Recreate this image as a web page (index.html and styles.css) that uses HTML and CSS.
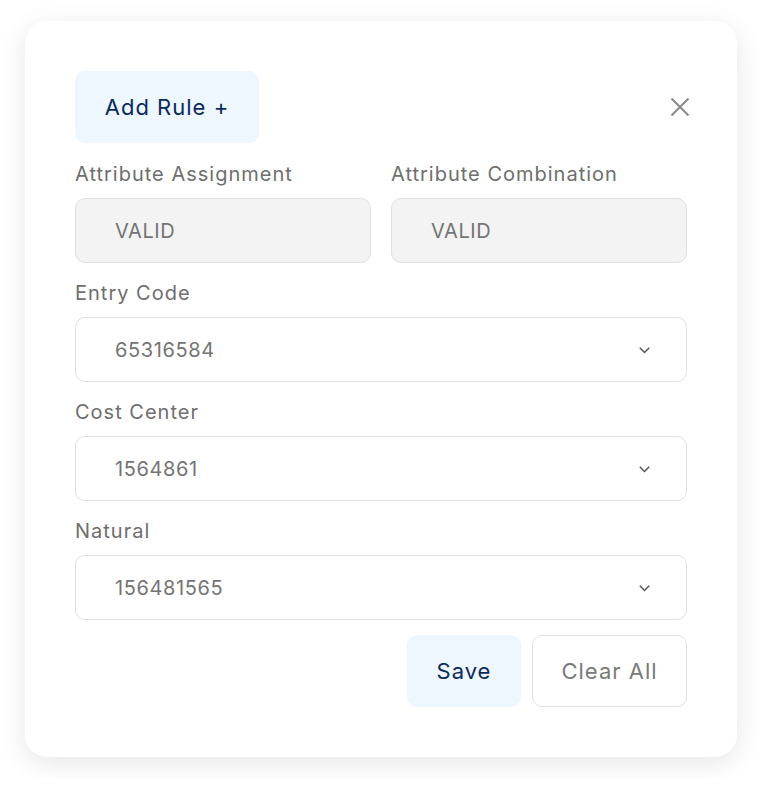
FILE: index.html
```html
<!DOCTYPE html>
<html>
<head>
<meta charset="utf-8">
<link rel="stylesheet" href="styles.css">
</head>
<body>
<div class="card">
  <div class="header">
    <button class="btn btn-primary add-rule">Add Rule +</button>
    <button class="close" aria-label="Close">
      <svg width="20" height="20" viewBox="0 0 20 20"><path d="M1.5 1.5 L18.5 18.5 M18.5 1.5 L1.5 18.5" stroke="#8c8c8c" stroke-width="2.2" fill="none" stroke-linecap="butt"/></svg>
    </button>
  </div>
  <div class="row">
    <div class="group">
      <div class="label">Attribute Assignment</div>
      <div class="field disabled">VALID</div>
    </div>
    <div class="group">
      <div class="label">Attribute Combination</div>
      <div class="field disabled">VALID</div>
    </div>
  </div>
  <div class="group">
    <div class="label">Entry Code</div>
    <div class="field select"><span>65316584</span><svg class="chev" width="11" height="7" viewBox="0 0 11 7"><path d="M0.8 0.8 L5.5 5.5 L10.2 0.8" stroke="#555" stroke-width="1.5" fill="none"/></svg></div>
  </div>
  <div class="group">
    <div class="label">Cost Center</div>
    <div class="field select"><span>1564861</span><svg class="chev" width="11" height="7" viewBox="0 0 11 7"><path d="M0.8 0.8 L5.5 5.5 L10.2 0.8" stroke="#555" stroke-width="1.5" fill="none"/></svg></div>
  </div>
  <div class="group">
    <div class="label">Natural</div>
    <div class="field select"><span>156481565</span><svg class="chev" width="11" height="7" viewBox="0 0 11 7"><path d="M0.8 0.8 L5.5 5.5 L10.2 0.8" stroke="#555" stroke-width="1.5" fill="none"/></svg></div>
  </div>
  <div class="actions">
    <button class="btn btn-primary save">Save</button>
    <button class="btn btn-outline clear">Clear All</button>
  </div>
</div>
</body>
</html>
```
FILE: styles.css
```css
* { box-sizing: border-box; }
html, body { margin: 0; padding: 0; background: #ffffff; }
body {
  padding: 21px 25px;
  font-family: "Inter", "Open Sans", sans-serif;
}
.card {
  width: 712px;
  height: 736px;
  background: #fff;
  border-radius: 22px;
  box-shadow: 0 6px 28px rgba(0,0,0,0.10);
  padding: 50px;
  display: flex;
  flex-direction: column;
}
.header {
  display: flex;
  justify-content: space-between;
  align-items: center;
  margin-bottom: 19px;
}
.btn {
  font-family: inherit;
  border: none;
  border-radius: 10px;
  font-size: 22px;
  letter-spacing: 1px;
  cursor: pointer;
  height: 72px;
  padding: 0;
}
.btn-primary {
  background: #eef6fe;
  color: #0b2a5c;
}
.add-rule { width: 184px; }
.close {
  background: none;
  border: none;
  padding: 0;
  margin-right: -3px;
  width: 20px;
  height: 20px;
  display: flex;
}
.row {
  display: grid;
  grid-template-columns: 1fr 1fr;
  gap: 20px;
}
.group { margin-bottom: 18px; }
.label {
  font-size: 20px;
  line-height: 24px;
  letter-spacing: 1px;
  color: #6e6e6e;
  margin-bottom: 12px;
}
.field {
  height: 65px;
  border: 1px solid #e0e0e0;
  border-radius: 10px;
  padding: 0 36px 0 39px;
  display: flex;
  align-items: center;
  font-size: 20px;
  letter-spacing: 0.6px;
  color: #747474;
}
.field.disabled { background: #f3f3f3; }
.field.select { justify-content: space-between; }
.chev { margin-top: 1px; }
.actions {
  display: flex;
  justify-content: flex-end;
  gap: 11px;
  margin-top: -3px;
}
.save { width: 114px; }
.clear {
  width: 155px;
  background: #fff;
  border: 1px solid #e0e0e0;
  color: #7a7a7a;
}
```
